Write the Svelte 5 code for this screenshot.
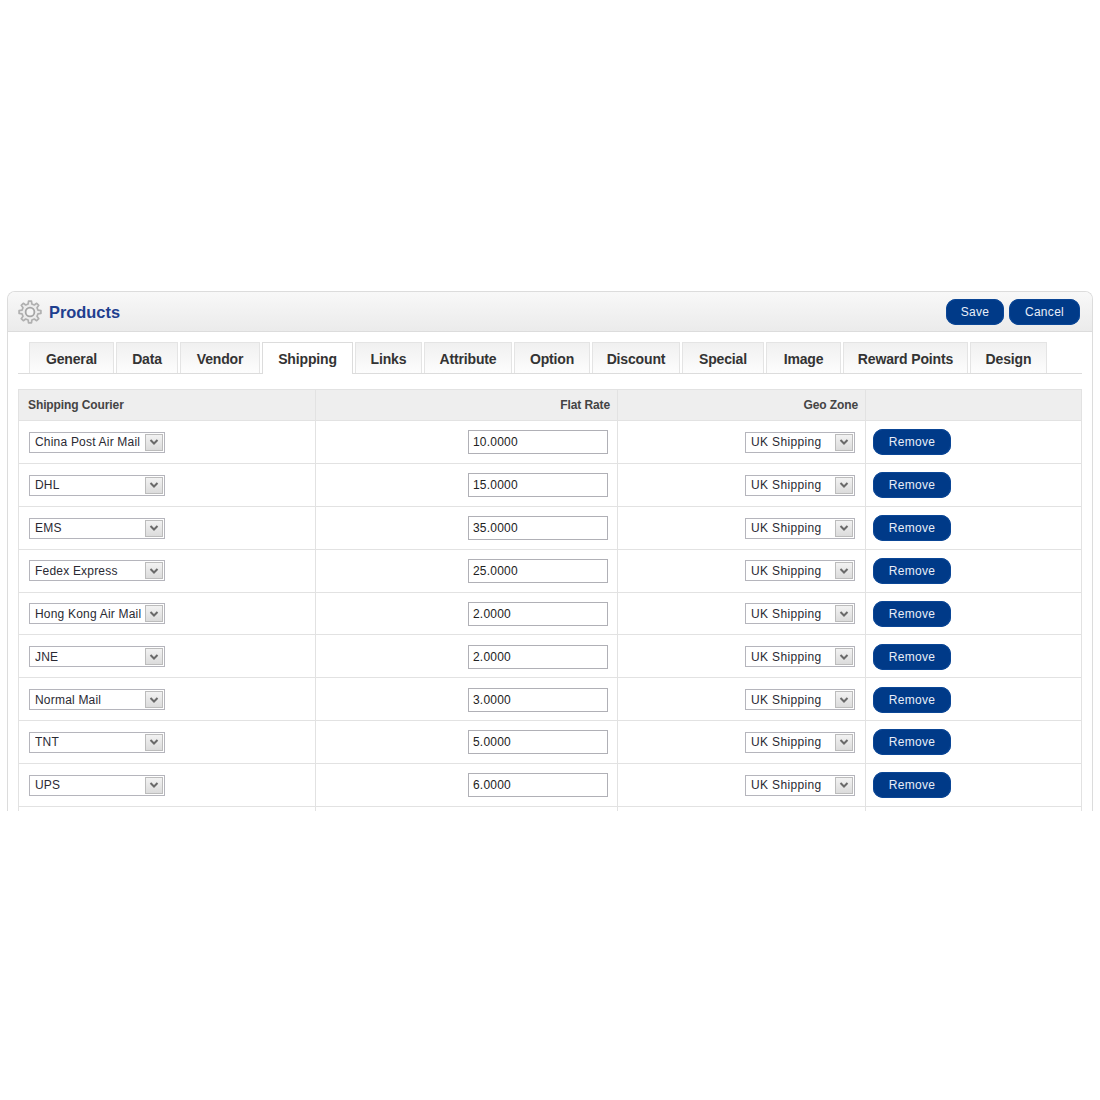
<script>
  const tabs = [['General',85],['Data',62],['Vendor',80],['Shipping',91],['Links',67],['Attribute',88],['Option',76],['Discount',88],['Special',82],['Image',75],['Reward Points',125],['Design',77]];
  const rows = [
    ['China Post Air Mail','10.0000'],['DHL','15.0000'],['EMS','35.0000'],['Fedex Express','25.0000'],
    ['Hong Kong Air Mail','2.0000'],['JNE','2.0000'],['Normal Mail','3.0000'],['TNT','5.0000'],['UPS','6.0000']
  ];
  function gearPath(cx, cy, ro, ri, n) {
    let d = '';
    const step = (Math.PI * 2) / n;
    for (let i = 0; i < n; i++) {
      const a = i * step - Math.PI / 2;
      const pts = [[ri, a - step * 0.3], [ro, a - step * 0.17], [ro, a + step * 0.17], [ri, a + step * 0.3]];
      for (const [r, t] of pts) {
        d += (d ? 'L' : 'M') + (cx + r * Math.cos(t)).toFixed(2) + ' ' + (cy + r * Math.sin(t)).toFixed(2);
      }
    }
    return d + 'Z';
  }
  const gear = gearPath(12, 12, 11, 8.2, 8);
</script>

{#snippet arrow()}
  <span class="arrow">
    <svg width="10" height="8" viewBox="0 0 10 8"><path d="M1.5 2 L5 5.5 L8.5 2" fill="none" stroke="#6a6a6a" stroke-width="2"/></svg>
  </span>
{/snippet}

<div class="panel">
  <header class="head">
    <div class="title">
      <svg class="gear" width="24" height="24" viewBox="0 0 24 24">
        <path d={gear} fill="#ececec" stroke="#b0b0b0" stroke-width="1.7" stroke-linejoin="round"/>
        <circle cx="12" cy="12" r="4.4" fill="#f4f4f4" stroke="#a6a6a6" stroke-width="1.8"/>
      </svg>
      <h1>Products</h1>
    </div>
    <div class="actions">
      <button class="btn save">Save</button>
      <button class="btn cancel">Cancel</button>
    </div>
  </header>

  <div class="body">
    <nav class="tabs">
      {#each tabs as [t, w]}
        <a href="#top" class:active={t === 'Shipping'} style="width: {w}px">{t}</a>
      {/each}
    </nav>

    <table>
      <colgroup><col class="c1"/><col class="c2"/><col class="c3"/><col class="c4"/></colgroup>
      <thead>
        <tr>
          <th class="l">Shipping Courier</th>
          <th class="r">Flat Rate</th>
          <th class="r">Geo Zone</th>
          <th></th>
        </tr>
      </thead>
      <tbody>
        {#each rows as [name, rate]}
          <tr>
            <td class="l courier">
              <span class="sel courier-sel"><span class="val">{name}</span>{@render arrow()}</span>
            </td>
            <td class="r"><input value={rate} /></td>
            <td class="r">
              <span class="sel geo-sel"><span class="val">UK Shipping</span>{@render arrow()}</span>
            </td>
            <td class="act"><button class="btn remove">Remove</button></td>
          </tr>
        {/each}
        <tr class="stub"><td></td><td></td><td></td><td></td></tr>
      </tbody>
    </table>
  </div>
</div>

<style>
  :global(body) { margin: 0; background: #fff; font-family: "Liberation Sans", Arial, sans-serif; }
  .panel {
    box-sizing: border-box;
    margin: 291px 7px 0;
    height: 520px;
    overflow: hidden;
    border: 1px solid #dcdcdc;
    border-bottom: 0;
    border-radius: 8px 8px 0 0;
    background: #fff;
  }
  .head {
    box-sizing: border-box;
    height: 40px;
    display: flex;
    align-items: center;
    justify-content: space-between;
    padding: 0 12px 0 10px;
    background: linear-gradient(#f8f8f8, #ebebeb);
    border-bottom: 1px solid #dcdcdc;
  }
  .title { display: flex; align-items: center; gap: 7px; }
  .gear { display: block; }
  h1 { margin: 1px 0 0; font-size: 16.4px; font-weight: 700; color: #1f3f8f; }
  .actions { display: flex; gap: 5px; }
  .btn {
    border: 0;
    background: #003a88;
    color: #e8eef8;
    font: 12px "Liberation Sans", Arial, sans-serif;
    letter-spacing: 0.3px;
    height: 26px;
    border-radius: 10px;
    padding: 0;
    box-shadow: inset 0 0 0 1px #0a4696;
  }
  .save { width: 58px; }
  .cancel { width: 71px; }
  .remove { width: 78px; }
  .body { padding: 10px 10px 0; }
  .tabs {
    display: flex;
    gap: 2px;
    height: 32px;
    padding-left: 11px;
    border-bottom: 1px solid #dcdcdc;
    margin-bottom: 15px;
    box-sizing: border-box;
  }
  .tabs a {
    box-sizing: border-box;
    flex: none;
    height: 31px;
    line-height: 32px;
    text-align: center;
    font-size: 14px;
    letter-spacing: -0.15px;
    font-weight: 700;
    white-space: nowrap;
    color: #333;
    text-decoration: none;
    border: 1px solid #e4e4e4;
    border-bottom: 0;
    background: linear-gradient(#f0f0f0, #fdfdfd);
  }
  .tabs a.active {
    height: 32px;
    background: #fff;
    border-color: #dcdcdc;
    color: #333;
  }
  table {
    width: 1063px;
    table-layout: fixed;
    border-collapse: collapse;
    border: 1px solid #e2e2e2;
    font-size: 12px;
    color: #222;
  }
  .c1 { width: 297px; }
  .c2 { width: 302px; }
  .c3 { width: 248px; }
  .c4 { width: 216px; }
  th, td { border: 1px solid #e2e2e2; box-sizing: border-box; }
  th {
    height: 31px;
    background: #eee;
    font-size: 12px;
    letter-spacing: -0.1px;
    font-weight: 700;
    color: #444;
    padding: 0 7px 0 9px;
  }
  td { height: 42.9px; padding: 0.6px 9px 0; }
  .l { text-align: left; }
  .r { text-align: right; }
  td.act { text-align: left; padding-left: 7px; }
  .stub td { height: 20px; }
  .sel {
    display: inline-flex;
    box-sizing: border-box;
    height: 21px;
    align-items: center;
    justify-content: space-between;
    border: 1px solid #b5b5bc;
    background: #fff;
    padding: 0 1px 0 5px;
    vertical-align: middle;
    text-align: left;
  }
  .val { font-size: 12px; color: #2a2a33; white-space: nowrap; overflow: hidden; letter-spacing: 0.2px; }
  .courier { padding-left: 10px; }
  .courier-sel { width: 136px; }
  .geo-sel { width: 110px; margin-right: 1px; }
  .geo-sel .val { letter-spacing: 0.35px; }
  .arrow {
    box-sizing: border-box;
    flex: none;
    width: 18px;
    height: 17px;
    display: flex;
    align-items: center;
    justify-content: center;
    background: linear-gradient(#f2f2f2, #dcdcdc);
    border: 1px solid #bcbcbc;
  }
  input {
    box-sizing: border-box;
    width: 140px;
    height: 24px;
    border: 1px solid #b0b0b6;
    padding: 0 4px;
    font: 12px "Liberation Sans", Arial, sans-serif;
    letter-spacing: 0.2px;
    color: #222;
    vertical-align: middle;
    outline: none;
  }
</style>
